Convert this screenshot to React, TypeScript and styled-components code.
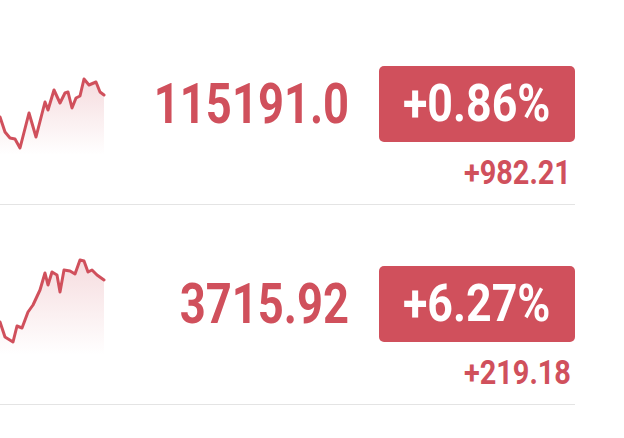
import styled, { createGlobalStyle } from "styled-components";

const GlobalStyle = createGlobalStyle`
  body {
    margin: 0;
    background: #ffffff;
    font-family: Roboto, "Liberation Sans", sans-serif;
  }
`;

const RED = "#d0505c";

type Quote = {
  id: string;
  price: string;
  percent: string;
  change: string;
  points: [number, number][];
};

const quotes: Quote[] = [
  {
    id: "a",
    price: "115191.0",
    percent: "+0.86%",
    change: "+982.21",
    points: [
      [0, 62], [5, 77], [10, 83], [15, 84], [20, 93], [29, 58], [36, 82],
      [45, 47], [48, 55], [54, 35], [60, 48], [65, 38], [68, 37], [72, 53],
      [76, 43], [80, 41], [84, 24], [89, 30], [96, 27], [100, 37], [104, 40],
    ],
  },
  {
    id: "b",
    price: "3715.92",
    percent: "+6.27%",
    change: "+219.18",
    points: [
      [0, 67], [5, 82], [13, 87], [17, 71], [22, 73], [28, 57], [33, 50],
      [40, 35], [45, 18], [48, 30], [52, 17], [57, 20], [60, 37], [64, 15],
      [70, 16], [75, 19], [80, 5], [84, 6], [88, 17], [92, 15], [97, 20],
      [104, 25],
    ],
  },
];

const Sparkline = ({ id, points }: { id: string; points: [number, number][] }) => {
  const line = points.map(([x, y], i) => `${i ? "L" : "M"}${x} ${y}`).join(" ");
  const last = points[points.length - 1][0];
  const area = `${line} L${last} 100 L0 100 Z`;
  return (
    <Chart viewBox="0 0 104 100" width={104} height={100}>
      <defs>
        <linearGradient id={`fill-${id}`} x1="0" y1="0" x2="0" y2="1">
          <stop offset="0%" stopColor={RED} stopOpacity={0.2} />
          <stop offset="100%" stopColor={RED} stopOpacity={0} />
        </linearGradient>
      </defs>
      <path d={area} fill={`url(#fill-${id})`} />
      <path
        d={line}
        fill="none"
        stroke={RED}
        strokeWidth={3}
        strokeLinejoin="round"
        strokeLinecap="round"
      />
    </Chart>
  );
};

const App = () => {
  return (
    <>
      <GlobalStyle />
      <List>
        {quotes.map((q) => (
          <Row key={q.id}>
            <Sparkline id={q.id} points={q.points} />
            <QuoteBox>
              <TopLine>
                <Price>
                  <Narrow $scale={0.81} $origin="right">
                    {q.price}
                  </Narrow>
                </Price>
                <Badge>
                  <Narrow $scale={0.86} $origin="center">
                    {q.percent}
                  </Narrow>
                </Badge>
              </TopLine>
              <Change>
                <Narrow $scale={0.85} $origin="right">
                  {q.change}
                </Narrow>
              </Change>
            </QuoteBox>
          </Row>
        ))}
      </List>
    </>
  );
};

export default App;

const List = styled.div`
  width: 575px;
  padding-top: 5px;
  display: flex;
  flex-direction: column;
`;

const Row = styled.div`
  box-sizing: border-box;
  height: 200px;
  padding-top: 50px;
  display: flex;
  align-items: flex-start;
  border-bottom: 1px solid #e4e4e4;
`;

const Chart = styled.svg`
  display: block;
  flex: none;
  overflow: visible;
`;

const QuoteBox = styled.div`
  flex: 1;
  min-width: 0;
  padding-top: 11px;
  display: flex;
  flex-direction: column;
`;

const TopLine = styled.div`
  display: flex;
  align-items: center;
  justify-content: flex-end;
  gap: 30px;
`;

/* the reference uses a condensed DIN face; squeeze Roboto to its width */
const Narrow = styled.span<{ $scale: number; $origin: string }>`
  display: inline-block;
  white-space: nowrap;
  transform: scaleX(${(p) => p.$scale});
  transform-origin: ${(p) => p.$origin} center;
`;

const Price = styled.div`
  font-size: 56px;
  font-weight: 700;
  line-height: 1;
  color: ${RED};
`;

const Badge = styled.div`
  flex: none;
  width: 196px;
  height: 76px;
  border-radius: 5px;
  background: ${RED};
  color: #ffffff;
  font-size: 52px;
  font-weight: 700;
  line-height: 1;
  display: flex;
  align-items: center;
  justify-content: center;
`;

const Change = styled.div`
  align-self: flex-end;
  margin-top: 13px;
  padding-right: 4px;
  font-size: 34px;
  font-weight: 700;
  line-height: 1;
  color: ${RED};
`;
